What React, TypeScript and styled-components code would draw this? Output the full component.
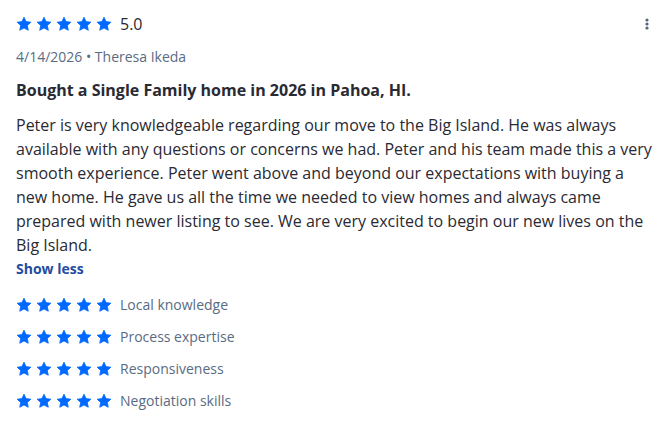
import React from "react";
import styled, { createGlobalStyle } from "styled-components";

const GlobalStyle = createGlobalStyle`
  body {
    margin: 0;
    background: #ffffff;
    font-family: "Open Sans", "Liberation Sans", sans-serif;
    color: #2a2a33;
  }
`;

const Card = styled.div`
  padding: 12px 16px 16px 16px;
  width: 669px;
  box-sizing: border-box;
`;

const TopRow = styled.div`
  display: flex;
  align-items: center;
  justify-content: space-between;
  height: 24px;
`;

const RatingGroup = styled.div`
  display: flex;
  align-items: center;
  gap: 8px;
`;

const Stars = styled.div<{ $size: number }>`
  display: flex;
  gap: 4px;
  svg {
    width: ${(p) => p.$size}px;
    height: ${(p) => p.$size}px;
    display: block;
  }
`;

const Score = styled.span`
  font-size: 16px;
  line-height: 24px;
  color: #2a2a33;
`;

const MenuButton = styled.button`
  border: none;
  background: none;
  padding: 0;
  width: 16px;
  height: 24px;
  margin-right: -2px;
  display: flex;
  align-items: center;
  justify-content: center;
  cursor: pointer;
`;

const Meta = styled.div`
  margin-top: 9px;
  font-size: 14px;
  line-height: 24px;
  color: #596b82;
`;

const Title = styled.h3`
  margin: 9px 0 0 0;
  font-size: 16px;
  line-height: 24px;
  font-weight: 700;
  color: #2a2a33;
`;

const Body = styled.p`
  margin: 11px 0 0 0;
  font-size: 16px;
  line-height: 24px;
  color: #2a2a33;
`;

const ToggleLink = styled.button`
  border: none;
  background: none;
  padding: 0;
  font-family: inherit;
  font-size: 14px;
  line-height: 24px;
  font-weight: 700;
  color: #1f4da1;
  cursor: pointer;
  display: block;
`;

const Categories = styled.div`
  margin-top: 12px;
  display: flex;
  flex-direction: column;
  gap: 8px;
`;

const CategoryRow = styled.div`
  display: flex;
  align-items: center;
  gap: 8px;
  height: 24px;
`;

const CategoryLabel = styled.span`
  font-size: 14px;
  line-height: 24px;
  color: #596b82;
`;

const Star = () => (
  <svg viewBox="0 0 24 24" aria-hidden="true">
    <path
      fill="#006aff"
      stroke="#006aff"
      strokeWidth="1.2"
      strokeLinejoin="round"
      d="M12 1.8l3.1 6.6 7.2.9-5.3 5 1.4 7.1L12 17.9l-6.4 3.5 1.4-7.1-5.3-5 7.2-.9z"
    />
  </svg>
);

const StarRow = ({ size }: { size: number }) => (
  <Stars $size={size}>
    {[0, 1, 2, 3, 4].map((i) => (
      <Star key={i} />
    ))}
  </Stars>
);

const categories = [
  "Local knowledge",
  "Process expertise",
  "Responsiveness",
  "Negotiation skills",
];

function App() {
  return (
    <>
      <GlobalStyle />
      <Card>
        <TopRow>
          <RatingGroup>
            <StarRow size={16} />
            <Score>5.0</Score>
          </RatingGroup>
          <MenuButton aria-label="More">
            <svg width="4" height="12" viewBox="0 0 4 12">
              <circle cx="2" cy="2" r="1.6" fill="#54657d" />
              <circle cx="2" cy="6" r="1.6" fill="#54657d" />
              <circle cx="2" cy="10" r="1.6" fill="#54657d" />
            </svg>
          </MenuButton>
        </TopRow>
        <Meta>4/14/2026 • Theresa Ikeda</Meta>
        <Title>Bought a Single Family home in 2026 in Pahoa, HI.</Title>
        <Body>
          Peter is very knowledgeable regarding our move to the Big Island. He
          was always available with any questions or concerns we had. Peter and
          his team made this a very smooth experience. Peter went above and
          beyond our expectations with buying a new home. He gave us all the
          time we needed to view homes and always came prepared with newer
          listing to see. We are very excited to begin our new lives on the Big
          Island.
        </Body>
        <ToggleLink>Show less</ToggleLink>
        <Categories>
          {categories.map((c) => (
            <CategoryRow key={c}>
              <StarRow size={16} />
              <CategoryLabel>{c}</CategoryLabel>
            </CategoryRow>
          ))}
        </Categories>
      </Card>
    </>
  );
}

export default App;
